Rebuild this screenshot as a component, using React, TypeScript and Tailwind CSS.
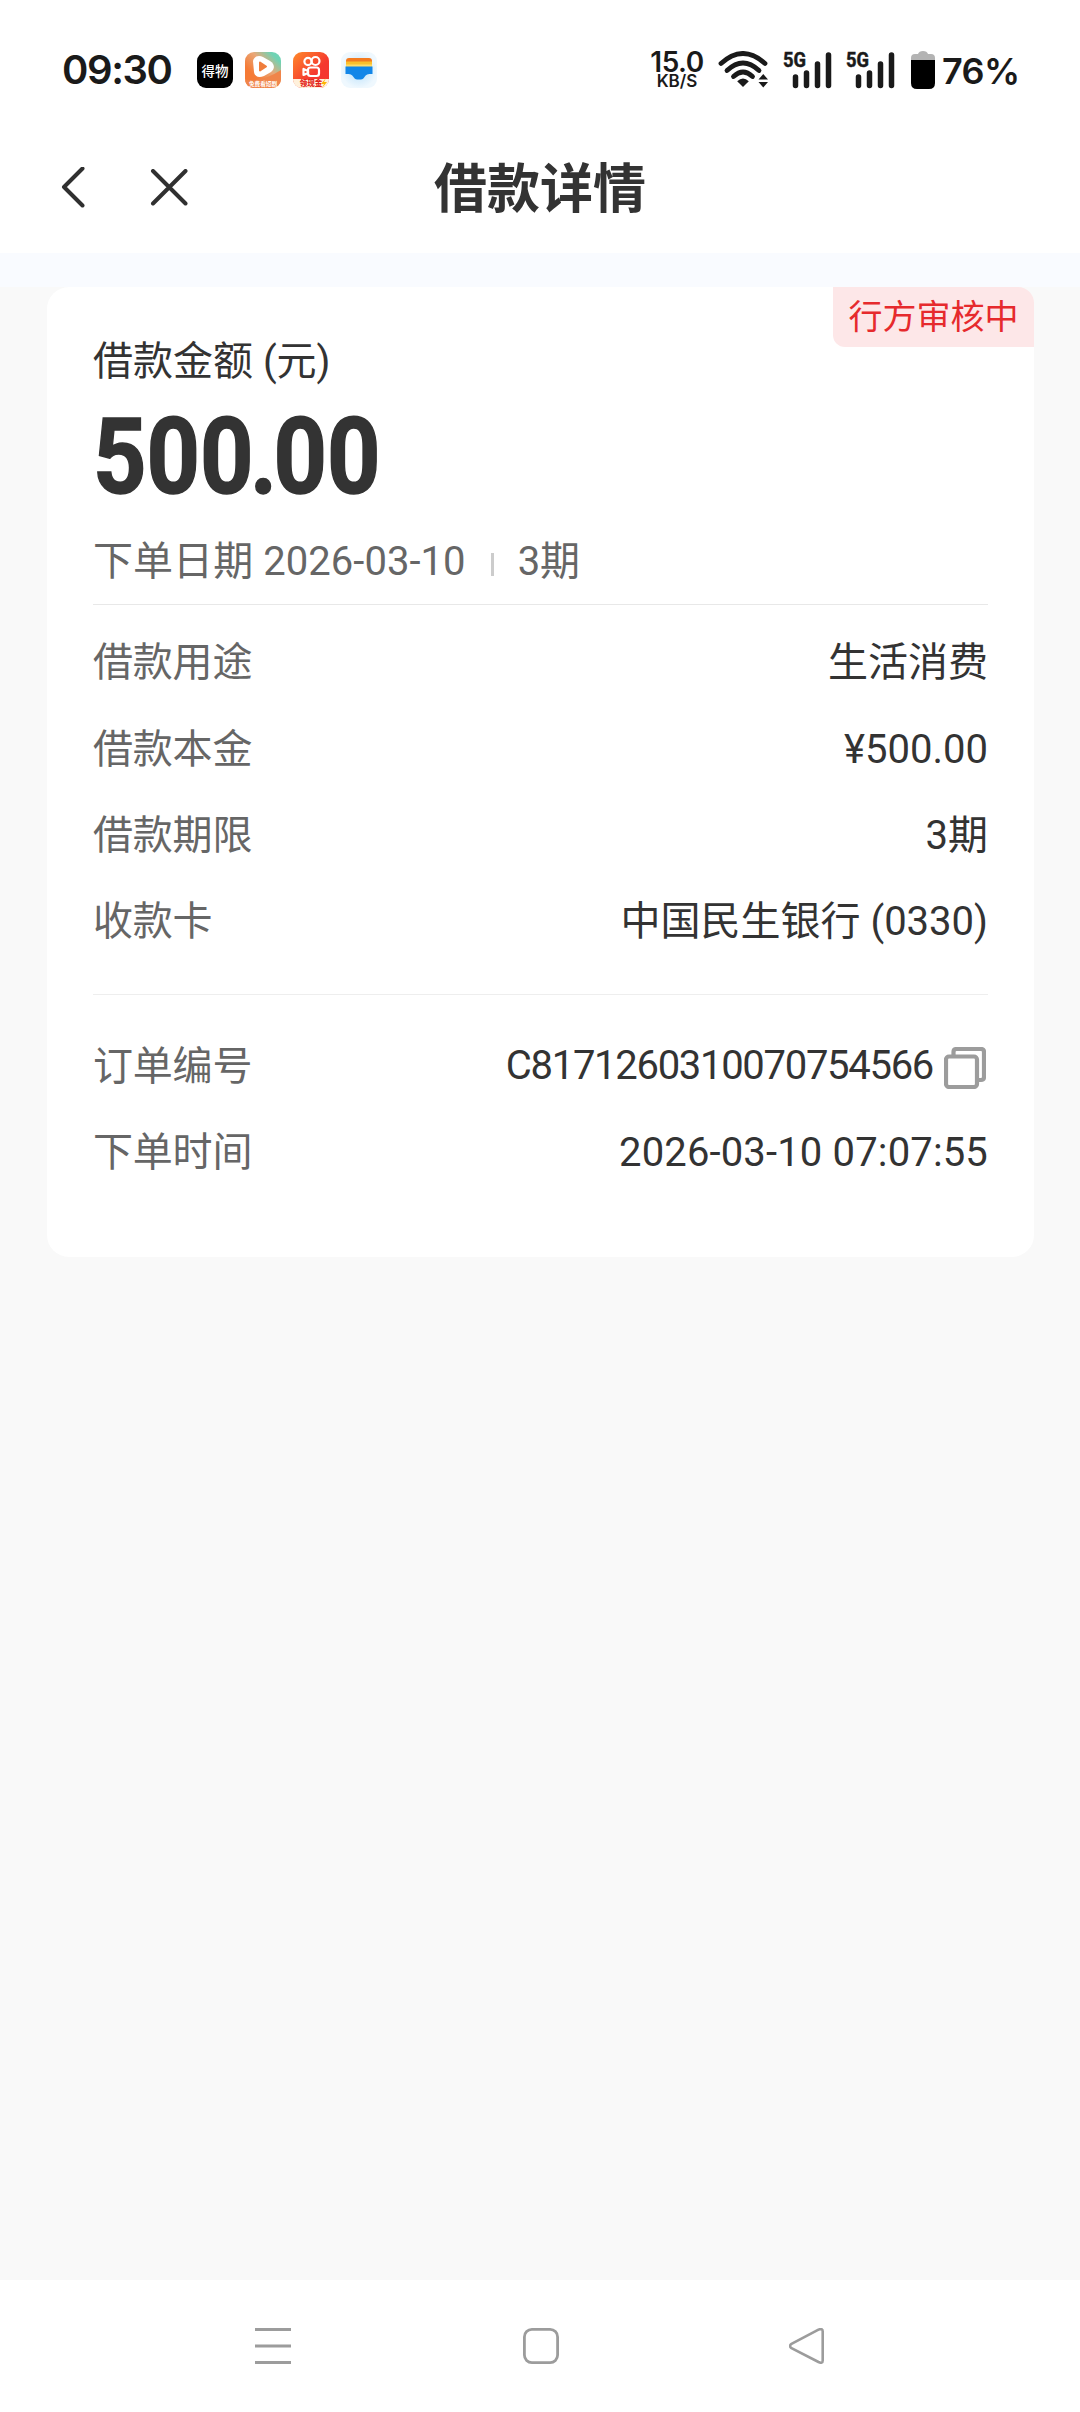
import React from 'react';

const LOAN_ROWS = [
  { label: '借款用途', value: '生活消费' },
  { label: '借款本金', value: '¥500.00' },
  { label: '借款期限', value: '3期' },
  { label: '收款卡', value: '中国民生银行 (0330)' },
];

const Row: React.FC<{ label: string; children: React.ReactNode }> = ({ label, children }) => (
  <div className="flex h-[86.4px] items-center justify-between">
    <span className="tracking-[-0.200px] text-[#666]">{label}</span>
    {children}
  </div>
);

const AppIcons: React.FC = () => (
  <svg width="182" height="36" viewBox="0 0 182 36" className="ml-[25px] font-['Noto_Sans_CJK_SC',sans-serif]">
    <defs>
      <linearGradient id="video" x1="0" y1="1" x2="1" y2="0">
        <stop offset="0.3" stopColor="#f57a35" />
        <stop offset="0.6" stopColor="#e9a878" />
        <stop offset="0.85" stopColor="#6fd3b4" />
      </linearGradient>
      <linearGradient id="kuai" x1="0" y1="0" x2="1" y2="1">
        <stop offset="0" stopColor="#ff8a2a" />
        <stop offset="0.6" stopColor="#f5382f" />
      </linearGradient>
      <radialGradient id="wallet">
        <stop offset="0" stopColor="#b5defa" />
        <stop offset="1" stopColor="#eff8fe" />
      </radialGradient>
    </defs>
    <rect width="36" height="36" rx="9" fill="#000" />
    <text x="18" y="23.5" textAnchor="middle" fontSize="13.5" fontWeight="500" fill="#fff">得物</text>
    <g transform="translate(48)">
      <rect width="36" height="36" rx="9" fill="url(#video)" />
      <path d="M0 28q18 2 36-10v9c0 5-4 9-9 9H9c-5 0-9-4-9-9z" fill="#f0854a" />
      <path d="M8 9c1-5 6-6 10-4l7 4c5 3 5 8 1 11l-7 4c-5 2-9 1-10-4z" fill="#fff" />
      <path d="M15 10.500l6 4-6 4z" fill="#ef7d3c" stroke="#ef7d3c" strokeWidth="2" strokeLinejoin="round" />
      <text x="18" y="33.5" textAnchor="middle" fontSize="5.6" fontWeight="700" fill="#fff">免费看短剧</text>
    </g>
    <g transform="translate(96)">
      <rect width="36" height="36" rx="9" fill="url(#kuai)" />
      <path d="M0 27h36c0 5-4 9-9 9H9c-5 0-9-4-9-9z" fill="#fff1dc" />
      <g fill="none" stroke="#fff" strokeWidth="2.2">
        <circle cx="15" cy="9.5" r="3.6" />
        <circle cx="22.5" cy="9" r="4" />
        <rect x="15" y="15.5" width="11" height="8.5" rx="2.5" />
        <path d="M10.5 17v6l4.5-2v-2z" strokeLinejoin="round" />
      </g>
      <text x="18" y="34" textAnchor="middle" fontSize="7.5" fontWeight="900" fill="#e3261d">领现金</text>
      <path d="M33 26l-5 6h3l-2 4 5-6h-3z" fill="#ffb300" />
    </g>
    <g transform="translate(144)">
      <rect width="36" height="36" rx="9" fill="url(#wallet)" />
      <path d="M5 9a3 3 0 0 1 3-3h20a3 3 0 0 1 3 3v3H5z" fill="#f47b20" />
      <path d="M5 9.500h26V13H5z" fill="#fbc02d" />
      <path d="M5 12.500h26V15H5z" fill="#ffdc6b" />
      <path d="M4.500 14.500h27V22c-5 0-6.500.5-8 3s-3 2.500-5.500 2.500-4 0-5.500-2.500-3-3-8-3z" fill="#1286e8" />
    </g>
  </svg>
);

const Signal: React.FC = () => (
  <svg width="49" height="38" viewBox="0 0 49 38" className="mr-[14px] overflow-visible font-[Roboto,sans-serif]">
    <text x="-2" y="16" fontSize="21" fontWeight="700" fill="#1a1a1a" stroke="#1a1a1a" strokeWidth="0.5" textLength="23" lengthAdjust="spacingAndGlyphs">5G</text>
    <g stroke="#1a1a1a" strokeWidth="5.500" strokeLinecap="round">
      <path d="M10.500 26v8.500M21.500 22v12.500M32.500 13v21.500M43.500 4v30.500" />
    </g>
  </svg>
);

const StatusBar: React.FC = () => (
  <div className="flex h-[140px] items-center pr-[60px] pl-[62px] font-[Inter,sans-serif] text-[#1a1a1a]">
    <span className="w-[110px] text-[40px] leading-none font-semibold tracking-[-1.400px] whitespace-nowrap">09:30</span>
    <AppIcons />
    <div className="ml-auto flex items-center">
      <div className="mr-[13px] flex w-[56px] flex-col items-center">
        <span className="text-[28px] leading-[23px] font-semibold tracking-[-0.500px]">15.0</span>
        <span className="text-[17px] leading-[15px] font-semibold">KB/S</span>
      </div>
      <svg width="52" height="38" viewBox="0 0 52 38" className="mr-[15px]">
        <g fill="none" stroke="#1a1a1a" strokeWidth="4.800" strokeLinecap="round">
          <path d="M3 12.500Q25-7.500 47 12.500" />
          <path d="M9 19.500Q25 4.500 41 19.500" />
          <path d="M15.500 25.500Q25 16.500 34.500 25.500" />
        </g>
        <path d="M25 36l-5.800-5.800q5.800-5.200 11.600 0z" fill="#1a1a1a" />
        <path d="M40.500 28.500h9.500l-4.750-5.500zM40.500 31h9.500l-4.750 5.500z" fill="#1a1a1a" />
      </svg>
      <Signal />
      <Signal />
      <svg width="24" height="38" viewBox="0 0 24 38" className="mr-[7px]">
        <path d="M0 9V7q0-4 4-4h3q1-3 5-3t5 3h3q4 0 4 4v2z" fill="#b3b3b3" />
        <path d="M0 9h24v23q0 6-6 6H6q-6 0-6-6z" fill="#000" />
      </svg>
      <span className="w-[78px] pt-[2px] text-[36px] leading-none font-semibold tracking-[-0.600px] whitespace-nowrap">76%</span>
    </div>
  </div>
);

const Header: React.FC = () => (
  <header className="grid h-[113px] grid-cols-3 items-center pb-[18px]">
    <div className="flex items-center pl-[61px]">
      <svg width="24" height="42" viewBox="0 0 24 42" fill="none" stroke="#303030" strokeWidth="4" strokeLinecap="round" strokeLinejoin="round">
        <path d="M21.500 1.500L3 20l18.500 18.500" />
      </svg>
      <svg width="38" height="38" viewBox="0 0 38 38" className="ml-[65px]" fill="none" stroke="#303030" strokeWidth="4" strokeLinecap="round">
        <path d="M3 2l32.500 32.500M35.500 2L3 34.500" />
      </svg>
    </div>
    <h1 className="pt-[6px] text-center text-[53px] leading-none font-bold whitespace-nowrap text-[#333]">借款详情</h1>
  </header>
);

const NavBar: React.FC = () => (
  <nav className="flex h-[132px] items-center justify-between bg-white pr-[255px] pl-[255px]">
    <svg width="36" height="36" viewBox="0 0 36 36" stroke="#9c9c9c" strokeWidth="3">
      <path d="M0 1.500h36M0 18h36M0 34.500h36" />
    </svg>
    <svg width="36" height="36" viewBox="0 0 36 36" className="ml-px" fill="none" stroke="#9c9c9c" strokeWidth="2.800">
      <rect x="1.400" y="1.400" width="33.200" height="33.200" rx="7.500" />
    </svg>
    <svg width="36" height="36" viewBox="0 0 36 36" fill="none" stroke="#9c9c9c" strokeWidth="2.600" strokeLinejoin="round">
      <path d="M2 16.200L29.500 1.600Q33.700 0 33.700 3.500V32.500Q33.700 36 29.500 34L2 19.800Q0 18 2 16.200z" />
    </svg>
  </nav>
);

const App: React.FC = () => (
  <div className="flex h-[2412px] w-[1080px] flex-col bg-[#f9f9f9] font-[Roboto,'Noto_Sans_CJK_SC',sans-serif]">
    <div className="bg-white">
      <StatusBar />
      <Header />
    </div>
    <div className="h-[34px] bg-[#f9fbff]"></div>

    <main className="flex-1 pr-[46px] pl-[47px]">
      <section className="relative h-[970px] rounded-[22px] bg-white px-[46px] pt-[45px] text-[40px] leading-none text-[#333]">
        <div className="absolute top-0 right-0 flex h-[60px] w-[201px] items-center justify-center rounded-tr-[16px] rounded-bl-[12px] bg-[#fde7e8] text-[34px] text-[#e62a2d]">
          行方审核中
        </div>
        <p className="h-[60px] leading-[60px]">借款金额 (元)</p>
        <p className="mt-[12px] h-[106px] origin-left scale-x-[0.880] text-[106px] leading-[106px] font-bold [-webkit-text-stroke:1.5px_#333]">
          500<span className="-mx-[4px]">.</span>00
        </p>
        <div className="mt-[22px] flex h-[60px] items-center text-[#666]">
          <span className="tracking-[0.050px]">下单日期 2026-03-10</span>
          <span className="mt-[4px] mr-[24px] ml-[25px] h-[23px] w-[3px] bg-[#ccc]"></span>
          <span className="tracking-[-0.200px]">3期</span>
        </div>
        <div className="mt-[12px] h-px bg-[#e8e8e8]"></div>
        <div className="mt-[15px]">
          {LOAN_ROWS.map((row) => (
            <Row key={row.label} label={row.label}>
              <span>{row.value}</span>
            </Row>
          ))}
        </div>
        <div className="mt-[28px] h-px bg-[#eee]"></div>
        <div className="mt-[29px]">
          <Row label="订单编号">
            <div className="flex items-center pr-[2px]">
              <span className="-mt-px tracking-[-1.300px]">C8171260310070754566</span>
              <svg width="42" height="42" viewBox="0 0 42 42" className="mt-[2px] ml-[11px]" fill="none" stroke="#9c9c9c" strokeWidth="4.200">
                <path d="M9.500 9V5q0-3 3-3H37q3 0 3 3v25q0 3-3 3h-4" />
                <rect x="2" y="9.500" width="31" height="30.500" rx="3" />
              </svg>
            </div>
          </Row>
          <Row label="下单时间">
            <span className="tracking-[0.150px]">2026-03-10 07:07:55</span>
          </Row>
        </div>
      </section>
    </main>

    <NavBar />
  </div>
);

export default App;
